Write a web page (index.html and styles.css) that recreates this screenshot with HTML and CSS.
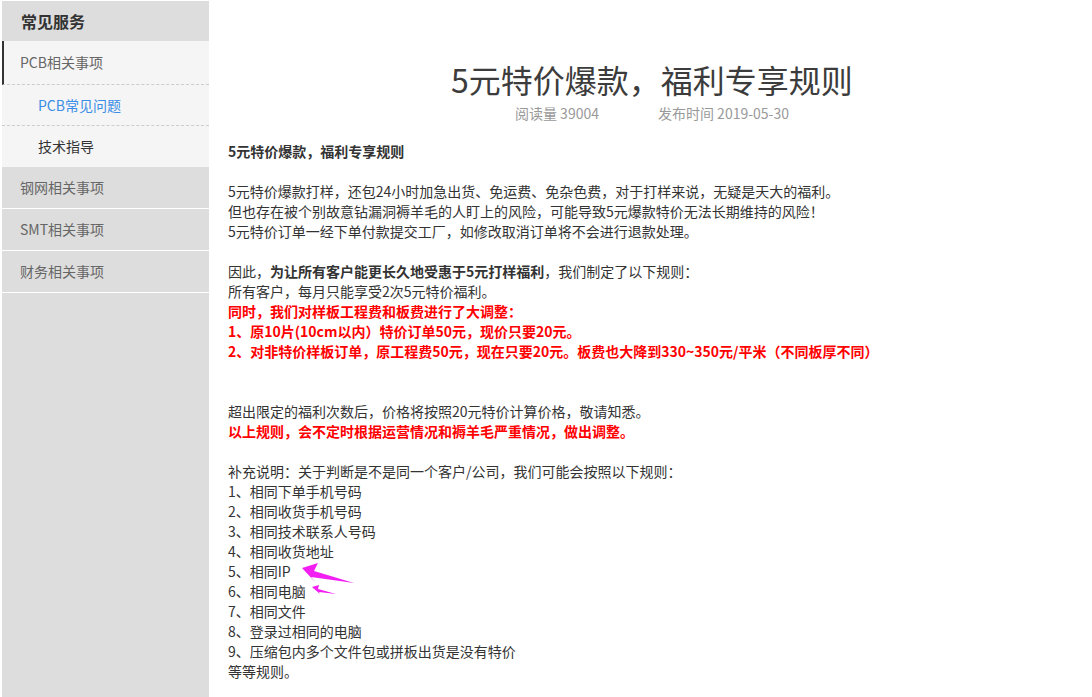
FILE: index.html
```html
<!DOCTYPE html>
<html lang="zh-CN">
<head>
    <meta charset="UTF-8">
    <title>5元特价爆款，福利专享规则</title>
    <link rel="stylesheet" href="styles.css">
</head>
<body>
    <div class="page">
        <div class="sidebar">
            <div class="side-title">常见服务</div>
            <div class="side-group active">
                <div class="side-item main">PCB相关事项</div>
                <div class="side-item sub current">PCB常见问题</div>
                <div class="side-item sub last">技术指导</div>
            </div>
            <div class="side-item">钢网相关事项</div>
            <div class="side-item">SMT相关事项</div>
            <div class="side-item">财务相关事项</div>
        </div>

        <div class="content">
            <h1 class="title">5元特价爆款，福利专享规则</h1>
            <div class="meta">
                <span>阅读量 39004</span>
                <span>发布时间 2019-05-30</span>
            </div>

            <div class="article">
                <p><b>5元特价爆款，福利专享规则</b></p>
                <p>
                    5元特价爆款打样，还包24小时加急出货、免运费、免杂色费，对于打样来说，无疑是天大的福利。<br>
                    但也存在被个别故意钻漏洞褥羊毛的人盯上的风险，可能导致5元爆款特价无法长期维持的风险！<br>
                    5元特价订单一经下单付款提交工厂，如修改取消订单将不会进行退款处理。
                </p>
                <p class="gap2">
                    因此，<b>为让所有客户能更长久地受惠于5元打样福利</b>，我们制定了以下规则：<br>
                    所有客户，每月只能享受2次5元特价福利。<br>
                    <b class="red">同时，我们对样板工程费和板费进行了大调整：</b><br>
                    <b class="red">1、原10片(10cm以内）特价订单50元，现价只要20元。</b><br>
                    <b class="red">2、对非特价样板订单，原工程费50元，现在只要20元。板费也大降到330~350元/平米（不同板厚不同）</b>
                </p>
                <p>
                    超出限定的福利次数后，价格将按照20元特价计算价格，敬请知悉。<br>
                    <b class="red">以上规则，会不定时根据运营情况和褥羊毛严重情况，做出调整。</b>
                </p>
                <p class="rules">
                    补充说明：关于判断是不是同一个客户/公司，我们可能会按照以下规则：<br>
                    1、相同下单手机号码<br>
                    2、相同收货手机号码<br>
                    3、相同技术联系人号码<br>
                    4、相同收货地址<br>
                    5、相同IP<br>
                    6、相同电脑<br>
                    7、相同文件<br>
                    8、登录过相同的电脑<br>
                    9、压缩包内多个文件包或拼板出货是没有特价<br>
                    等等规则。
                    <svg class="arrows" width="80" height="40" viewBox="0 0 80 40">
                        <polygon points="5,10 21,5 17,13 57,25 14,19 19,25" fill="#f21ef2"/>
                        <polygon points="15,29 22,27 21,31 39,36 22,34 23,36" fill="#f21ef2"/>
                    </svg>
                </p>
            </div>
        </div>
    </div>
</body>
</html>
```

FILE: styles.css
```css
* {
    margin: 0;
    padding: 0;
    box-sizing: border-box;
}

body {
    font-family: "Noto Sans CJK SC", "Noto Sans", sans-serif;
    color: #333;
    background: #fff;
    font-size: 14px;
}

.page {
    display: flex;
    min-height: 100vh;
    padding: 1px 0 0 2px;
}

.sidebar {
    width: 207px;
    background-color: #dddddd;
    flex-shrink: 0;
}

.side-title {
    height: 40px;
    line-height: 40px;
    padding-left: 19px;
    font-size: 16px;
    font-weight: bold;
    color: #333;
}

.side-item {
    height: 42px;
    line-height: 41px;
    padding-left: 18px;
    color: #666;
    border-bottom: 1px solid #fff;
}

.side-group {
    background-color: #f5f5f5;
}

.side-group .side-item {
    border-bottom: 1px dashed #ccc;
}

.side-group .main {
    height: 44px;
    line-height: 43px;
    border-left: 2px solid #333;
    padding-left: 16px;
}

.side-group .sub {
    height: 41px;
    line-height: 40px;
    padding-left: 36px;
    color: #333;
}

.side-group .current {
    color: #3a8ee6;
}

.side-group .last {
    border-bottom: none;
    line-height: 41px;
}

.content {
    flex: 1;
    padding: 58px 16px 20px 19px;
}

.title {
    font-size: 32px;
    line-height: 40px;
    font-weight: normal;
    text-align: center;
    color: #3c3c3c;
}

.meta {
    margin-top: 4px;
    display: flex;
    justify-content: center;
    gap: 59px;
    line-height: 20px;
    color: #999;
}

.article {
    margin-top: 18px;
    line-height: 20px;
}

.article p {
    margin-bottom: 20px;
}

.article p.gap2 {
    margin-bottom: 40px;
}

.red {
    color: #f00;
}

.rules {
    position: relative;
}

.arrows {
    position: absolute;
    left: 69px;
    top: 97px;
}
```
